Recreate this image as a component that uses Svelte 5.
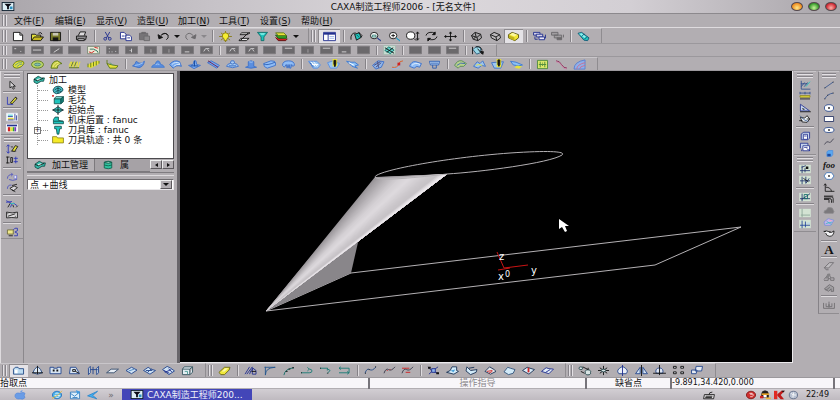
<script lang="ts">
    type Shape = [fill: string, stroke: string, d: string];
    type Group = { size: number; items: string[] };

    const K = '#141414';
    const GR = '#6b696c';
    const Y = '#e6e23a';
    const OL = '#5f7a1c';
    const B = '#5b8fe0';
    const LB = '#a9cdf5';
    const N = '#23308f';
    const T = '#1fc4bd';
    const R = '#d02222';
    const W = '#ffffff';
    const MINT = '#d3e3d3';

    // grey plate used by every disabled machining button
    const plate = (mark: string): Shape[] => [
        [GR, '#7c7a7d', 'M1.5 1.5h13v8h-13z'],
        ['none', '#d8d6d9', mark]
    ];
    const mintPlate: Shape = [MINT, 'none', 'M1 1h14v10h-14z'];

    // all icons are drawn on a 16 x 12 grid
    const icons: Record<string, Shape[]> = {
        new: [[W, K, 'M2.5 1.5h7l3 3v6h-10z'], ['none', K, 'M9.5 1.5v3h3']],
        open: [[Y, K, 'M1.5 10.5v-7h4l1 1h5v2'], ['#c8b820', K, 'M1.5 10.5l3-4h10l-3 4z'], ['none', K, 'M9 2.5q3-2 4 1']],
        save: [['#77792a', K, 'M2.5 1.5h11v9h-11z'], ['#c9c7b5', 'none', 'M5 2h6v3h-6z'], [K, 'none', 'M5 7h6v4h-6z']],
        print: [['#dcdadc', K, 'M4.5 5l2-4h6l-1.5 4'], ['#8d8b8e', K, 'M2.5 5.5h11l-1 4h-10z'], ['#d7d5d8', K, 'M4 8.5h7v2h-7z']],
        cut: [['none', N, 'M5.5 1l4 7M10.5 1l-4 7'], ['none', N, 'M4 8.5a1.5 1.5 0 1 0 3 0a1.5 1.5 0 1 0 -3 0M9 8.5a1.5 1.5 0 1 0 3 0a1.5 1.5 0 1 0 -3 0']],
        copy: [[W, N, 'M2.5 1.5h4l2 2v5h-6z'], [W, N, 'M8.5 4.5h4l2 2v4h-6z'], ['none', N, 'M10 7.5h3M4 5.5h3']],
        paste: [['#767477', GR, 'M2.5 2.5h9v7h-9z'], ['#8d8b8e', GR, 'M7.5 5.5h6v5h-6z'], [GR, GR, 'M5 1.5h4v1h-4z']],
        undo: [['none', K, 'M5 5q5-5 8 0q1 3-2 4.5'], ['none', K, 'M6 4q5-3 7 1'], [K, K, 'M2 4l1 4.5l4-1.5z']],
        redo: [['none', GR, 'M11 5q-5-5-8 0q-1 3 2 4.5'], [GR, GR, 'M14 4l-1 4.5l-4-1.5z']],
        bulb: [['none', '#8a7d18', 'M8 0v12M1 6h14M3 2l10 8M13 2l-10 8'], ['#f5ee32', '#8a7d18', 'M4.5 5.5a3.5 3.5 0 1 1 7 0q0 2-2 3v2h-3v-2q-2-1-2-3']],
        swap: [['#e8e8ea', K, 'M5 2h9l-3 2h-8zM4 8h9l-3 2.5h-8z'], ['none', K, 'M12 2l-8 8']],
        funnel: [[T, '#146e6a', 'M2.5 1.5h11l-4 5v4h-3v-4z'], ['#8ef0ea', 'none', 'M5 2.5h6l-1.5 1.5h-3z']],
        layers: [[R, '#5c1010', 'M1.5 7l3 3.5h8l2-2'], ['#34a024', '#1c5a12', 'M1.5 4.5l3 3.5h9v-3z'], [Y, OL, 'M1.5 2h9l3 3h-9z']],
        panel: [[W, N, 'M1.5 1.5h13v9h-13z'], [N, 'none', 'M2 2h12v2h-12z'], ['none', N, 'M6.5 3v7'], ['none', '#9fb8e8', 'M8 6h5M8 8h5']],
        redraw: [[T, K, 'M6 3.5l5-1.5l2 5l-5 3z'], ['none', K, 'M2 9.5q-1-7 5-7.5M10 1l4 4l-1 2'], ['none', '#14605c', 'M8 4l3 3']],
        zoomBox: [[W, K, 'M2.5 5a4 3.5 0 1 0 8 0a4 3.5 0 1 0 -8 0'], ['none', '#2e7d74', 'M4.5 4.5h4v2h-4z'], ['none', '#2b3f8d', 'M10 8l4 3M10 7.5l4 3']],
        zoomIn: [[W, K, 'M2.5 5a4 3.5 0 1 0 8 0a4 3.5 0 1 0 -8 0'], ['none', K, 'M4.5 5h4M6.5 3v4'], ['none', '#1f9cc4', 'M10 8l4 3M10 7.5l4 3']],
        zoomDyn: [[W, K, 'M1.5 5a4.5 4 0 1 0 9 0a4.5 4 0 1 0 -9 0'], ['none', K, 'M10 8.5l2 2M13.5 1v9M12 3l1.5-2l1.5 2M12 8l1.5 2l1.5-2']],
        rotate: [['none', K, 'M2 5q1-4 7-3.5l3 1M14 6q-1 4-7 3.5l-3-1'], [K, K, 'M12 1v3h-3zM4 11v-3h3z']],
        pan: [['none', K, 'M8 1v10M2 6h12'], [K, K, 'M7 2.5l1-1.5l1 1.5zM7 9.5l1 1.5l1-1.5zM3 5v2l-1.5-1zM13 5v2l1.5-1z']],
        wire: [['#a9a7aa', K, 'M2.5 5l4-3.5l6 2l1 4l-4 3l-5-1.5z'], ['none', K, 'M2.5 5l6 2l4-3.5M8.5 7l1 3.5M6.5 2l1 4l-3 3']],
        hidden: [['#bab7ba', K, 'M2.5 4l4-2.5l6 2.5l1 3.5l-4 3l-6-3z'], ['none', K, 'M2.5 4l6 2.5l4-2.5M8.5 6.5l1 4']],
        shade: [['#f2e632', '#5d5710', 'M2.5 4l4-2.5l7 2.5v3.5l-4 3l-7-3z'], ['#c0b31c', 'none', 'M3 4.5l6 2.5v3.5l-6-3z'], ['#fbf7a0', 'none', 'M4 4l3-2l5 2l-3 2z']],
        cascade: [['#d5d3e8', N, 'M1.5 1.5h7v3h-7z'], ['#d5d3e8', N, 'M4.5 3.5h7v3h-7z'], ['#e8e6f5', N, 'M7.5 6.5h6v3h-6z'], ['none', N, 'M14.5 4v4M3 6v3h3']],
        cascadeOff: [['#a09da0', GR, 'M1.5 1.5h7v3h-7zM4.5 4.5h8v3h-8z'], [GR, GR, 'M7.5 7.5h5v2h-5z'], ['none', GR, 'M14.5 4v3']],
        torch: [[T, '#155a77', 'M2 2.5l4-1l8 6l-1.5 3l-4-.5z'], ['#8ff0f0', 'none', 'M3 3l3-.5l5 4l-2 1z'], ['none', '#155a77', 'M6 6l3-3M9 9l3-3']],
        plate1: plate('M3.5 4h2M10 7h1'),
        plate2: plate('M3 5.5h9'),
        plate3: plate('M5 8l6-4'),
        plate4: plate('M7 0'),
        plate5: plate('M4 7.5h1M7 7.5h1M11 7h1M4 4h1'),
        plate6: plate('M8 4v4M6 6h1'),
        plate7: plate('M8 5.5h1M8 7.5h1'),
        plate8: plate('M5 7.5h5'),
        plate9: plate('M5 7l2-3h4M9 5l2 2'),
        plate10: plate('M4 3.5h8'),
        path: [['#e9ecd8', '#7d8a78', 'M1.5 1.5h13v8h-13z'], ['none', R, 'M3 7.5l3 1l3-2M9 2.5l4 1'], ['none', '#2c6e5d', 'M4 4.5h4l4 2l1 2']],
        simulate: [['#c6dcd2', '#a4b8ae', 'M1.5 .5h13v10h-13z'], ['#5fd0c8', '#146e6a', 'M3 6l4-4l6 3.5l-4 4z'], ['none', K, 'M3 3l10 6M5 8l7-5']],
        post: [['#9ad7e6', '#2a5d7a', 'M2 5q4-5 8-2l1 5l-5 2z'], ['none', K, 'M1.5 2v8M5 2q6-1 7 4M7 4l5 6'], [K, 'none', 'M9 6l5 1l-1 4z']],
        y1: [[Y, OL, 'M2 7q2-5 8-5q4 0 4 2.5q-2 5-8 5.5q-4 0-4-3'], ['none', '#5f9c8c', 'M4 7q4-4 8-3M6 8.5q3-3 6-3']],
        y2: [['#bcd66a', OL, 'M1.5 6a6.5 4 0 1 0 13 0a6.5 4 0 1 0 -13 0'], ['#83bbb0', '#4c8878', 'M4.5 6a3.5 1.5 0 1 0 7 0a3.5 1.5 0 1 0 -7 0']],
        y3: [['#c6cc44', OL, 'M2 10q1-8 7-8l5 3q-5 0-5 5z'], ['none', '#f2f08a', 'M4 9q1-5 6-5.5M6.5 9q1-3 5-4']],
        y4: [['none', Y, 'M3 9l2-6l1 6l2-6l1 6l2-6l1 6l2-6M2 8l2-5'], ['none', OL, 'M2 9.5h11M4.5 8l2-5M8 8l2-5']],
        y5: [[Y, 'none', 'M1 8l3-3l8-3l3 1l-2 3l-8 4z'], ['none', OL, 'M2 9v-4M5 9v-5M8 8v-5M11 7v-5M14 5v-3']],
        y6: [['none', OL, 'M2 1v4l3 2'], [Y, OL, 'M2 5l6 1.5l6 1l-2 2.5h-7z'], ['none', '#5b9c78', 'M5 4l4 3']],
        b1: [[B, '#3f72c8', 'M1.5 7.5q3-1 4-5l3 2q3 1 6-2q-1 6-6 7z'], ['none', LB, 'M4 7q4 0 9-3']],
        b2: [[B, '#4179cf', 'M1.5 9q1-3 4-3q1-4 3-4t3 4q3 0 4 3z'], ['none', LB, 'M6 6q2-1 4 0']],
        b3: [['#78aaf0', '#3f72c8', 'M1.5 6q5-6 11-3l2 5q-6-2-9 2z'], ['none', '#d6e9fb', 'M4 6q4-4 9-1M6 8q3-3 7-2']],
        b4: [['#78aaf0', '#3f72c8', 'M1.5 7l5-1l1-4h2l1 4l4 1l-7 3.5z'], ['none', '#17499c', 'M8 2v6M4 7.5h8']],
        b5: [['#78aaf0', '#3f72c8', 'M1.5 4l4-2l9 5l-3 3z'], ['none', '#6a1a50', 'M2 2l11 7']],
        b6: [[LB, '#3f72c8', 'M1.5 8q1-3 4-3l1-3h3l1 3q3 0 4 3q-6 3-13 0'], ['none', '#2f62b8', 'M6 5q2 1 4 0M4 7.5h8']],
        b7: [[B, '#3f72c8', 'M1.5 9l3-1v-5q3-2 6 0v5l3 1q-6 2-12 0'], ['none', LB, 'M5.5 3q2.5 1 4 0']],
        b8: [['#8fbcf5', '#3f72c8', 'M1.5 5l8-3q5 0 5 2v3l-9 3q-4-1-4-5'], ['none', '#2f62b8', 'M2 5.5q3 2 12-2']],
        b9: [['#8fbcf5', '#3f72c8', 'M1.5 7q0-5 6.500-5t6.5 5l-2 1l-1-2l-1 4h-1v-4l-1 4l-1-4l-1 4l-1-4l-2 3z']],
        b10: [['#9cc6f0', B, 'M1.5 2.5l9 0l4 4l-3 3.5h-5z'], ['none', W, 'M4 3l5 5M7 3l4 5M4 6h8'], ['none', '#2f62b8', 'M3 4l4 5']],
        b11: [['#9cc6f0', B, 'M1.5 4l6-2l7 3l-3 5h-7z'], [Y, 'none', 'M7 0h5v8h-5z'], [K, K, 'M8.500 1.5h2v4l-1 3l-1-3z']],
        b12: [['#8cc0f5', '#3d7bd2', 'M1.5 2.5l5 1h4l4 3l-4 1l3 2.5l-6-2l-3-3z'], ['none', W, 'M4 4l6 3']],
        b13: [['#8fb5ea', '#3f72c8', 'M1.5 7l6-5l6.500 1l-3 6l-6 2z'], ['none', '#4a4a7a', 'M3 7l7-4M5 9l6-5M7 2.5l1 7']],
        b14: [['none', '#d8622c', 'M2 9q6 1 7-3t5-4'], ['none', '#8fb5ea', 'M2 10.5q8 1 9-5'], [R, 'none', 'M8 4h3v3h-3z']],
        b15: [['#8fbcf5', '#3f72c8', 'M1.5 8q2-6 7-5l6 2l-2 4l-3-1l-3 2z'], ['none', '#e8f2fc', 'M4 7q4-4 9-1']],
        b16: [['#bcd8f7', '#2f5fb0', 'M2.5 2.5h11l-1 4h-9z'], ['none', '#2f5fb0', 'M6 6.5v3.5h4v-3.5M4 4.5h8']],
        g1: [['#b7d18c', '#5b8b5b', 'M1.5 7q3-6 8-5l5 3l-3 3h-4l-2 2z'], ['none', '#3f67b3', 'M4 7q4-4 9-2']],
        g2: [['#9cc4ec', '#3f72c8', 'M1.5 8l4-5l3 2l3-3l3 6l-4-1l-4 3z'], ['none', Y, 'M4 7l3-1l4 1']],
        g3: [['#9cc6f0', '#3f72c8', 'M1.5 4l13-1l-3 7h-7z'], [Y, 'none', 'M7 0h5v9h-5z'], [K, K, 'M8.5 1h2v5l-1 2l-1-2z']],
        g4: [['#8cc0f5', '#3d7bd2', 'M1.5 2.5l6 1l7 3l-4 1l-6-1z'], [Y, 'none', 'M8 7l6 1l-3 2.5l-5-1z']],
        chip: [['#dbe86a', '#4c8a3c', 'M2.5 1.5h11v9h-11z'], ['none', '#4c8a3c', 'M5.5 3v6M10.5 3v6M7.5 4.5h1M7.5 7h1M4 6h8']],
        curveP: [['none', '#86254f', 'M2 2q4 0 6 4t6 4'], ['none', '#c884a8', 'M2 3q4 0 6 4t6 4']],
        fan: [['#8fb0ea', '#5a7fd0', 'M2 11q0-8 12-10v10z'], ['none', '#cc6f8f', 'M5 11q0-5 9-7M8 11q0-3 6-4']],
        arrow: [['#d8d6d9', K, 'M5.5 1.5v8l2-1.5l2 3l1.5-1l-2-2.5h3z']],
        sketch: [['none', '#2832b8', 'M2.5 1v9h7'], [Y, K, 'M6 8.5l6-7l2 1.5l-6 6.5z'], [K, K, 'M12 1.5l2 1.5']],
        props: [[W, '#e8eef8', 'M1.5 1.5h13v9h-13z'], ['#7adce4', 'none', 'M3 3h6v2h-6z'], ['#e6dc46', 'none', 'M3 7h7v2h-7z'], ['none', N, 'M11.5 2v8M13.5 4v6M3 5.5h6M3 9.5h7']],
        palette: [[W, W, 'M1.5 1.5h13v9h-13z'], [N, 'none', 'M2 2h12v2h-12z'], [R, 'none', 'M3 5h3v5h-3z'], [Y, 'none', 'M6 5h3v5h-3z'], ['#28a23c', 'none', 'M9 5h2v5h-2z'], ['#7b30c0', 'none', 'M11 5h2v5h-2z']],
        dim1: [['none', '#2832b8', 'M3.5 1v10M1.5 3l2-2l2 2M1.5 9l2 2l2-2'], ['none', K, 'M7 3.5h2M7 8.5h6'], [Y, K, 'M8 8l4-6l3 1l-4 6z']],
        dim2: [['none', K, 'M2.5 2v8M1 2.5h4M1 9.5h4M6.5 3v6h2v-6z'], ['none', '#2832b8', 'M12.5 2v8M10 4h5M10 8h5']],
        rot1: [['none', '#4a50c0', 'M2.5 8q0-5 6-5M9 3l-2-2M9 3l-2 2M13.5 4v5q-5 2-9 0'], [W, '#8084d8', 'M10.5 4.5h3v3h-3z']],
        rot2: [['none', '#4a50c0', 'M2.5 7q0-5 5-4.5'], ['#dad8dc', K, 'M5.5 6.5l5-3l4 2l-5 4z'], ['none', K, 'M8 3l6-1.5M8 8l4 2.5']],
        trim: [['none', '#2832b8', 'M1 4l7-1M1 2l6 3M10 5l4 3M8 6l-2 4'], ['none', K, 'M3 10l3-5M10 10l-1-3M13 10l2-2'], ['none', T, 'M6 5.5h5']],
        film: [['#dcdadc', K, 'M1.5 2.5q7 2 13 0v7q-7-1-13 0z'], ['none', K, 'M3 7.5l9-3M3 4v1M12 7v1']],
        macro: [['#efe88a', '#6a6636', 'M2.5 3.5h7v5h-7z'], ['none', '#2832b8', 'M9.5 3.5l2-2h3v3l-3 1.5l3 1.5v3h-4'], ['none', K, 'M4 10.5h5']],
        axis: [['none', '#2c4c8c', 'M3.5 1v10h11M3.5 8l4-5M7 8l4-5M3 4.5h8'], ['none', T, 'M9 8l5-6']],
        ruler: [['none', '#2c4c8c', 'M2 2.5h12M2 1v3M14 1v3M8 1v3'], [Y, '#8d8424', 'M2 5.5h12v2h-12z'], ['none', K, 'M2 9.5h12']],
        triangle: [['#c5d3ea', N, 'M2.5 1.5v8h11z'], ['none', K, 'M5.5 6v1.5h2M2 10.5h13']],
        blob: [['#eef2f6', K, 'M2.5 4l5 1l3-3l3 4l-3 4l-6-.5z'], ['none', '#3b5a92', 'M2 2l5 5l5 2'], ['none', K, 'M1 8h4M10 6h4']],
        save3d: [['#c5d3ea', N, 'M3.5 10.5v-7l3-2h7v7l-2 2z'], [W, N, 'M6 4h5v6h-5z'], ['none', N, 'M7 6h3']],
        save4d: [['#c5d3ea', N, 'M2.5 7.5v-6h9v3'], [W, N, 'M5.5 4.5h8v6h-8z'], ['none', N, 'M7 6.5h4M10 8l4 2.5M4 9v2']],
        ax1: [mintPlate, ['none', '#1d2f6a', 'M2 8h12M4.5 2v9M4 4l5-2M8 5v5'], [K, 'none', 'M9 3h3v3h-3z']],
        ax2: [mintPlate, ['none', '#1d2f6a', 'M2 7h12M4.5 2v9M9 2v8l4-6'], ['none', K, 'M6 4l6 4']],
        ax3: [mintPlate, ['none', '#1d2f6a', 'M2 8h12M4.5 2v9M4 9l10-7'], ['none', '#0f6b68', 'M7 3h4v5h-4z']],
        ax4: [mintPlate, ['none', '#8aa596', 'M4.5 1v10M3 8.5h11']],
        ax5: [mintPlate, ['none', '#1d3f9a', 'M4.5 2v9M2 7.5h12M8.5 3v7'], ['none', LB, 'M10 5h4']],
        line: [['none', '#34538e', 'M3 9.5l10-7'], [K, K, 'M2.5 9.5h1M12.5 2.5h1']],
        arc: [['none', '#34538e', 'M3 9.5q3-6 10-7'], [K, K, 'M2.5 9.5h1M12.5 2.5h1M6 5h1']],
        circle: [[W, '#26488e', 'M2.5 6a5.5 4 0 1 0 11 0a5.5 4 0 1 0 -11 0'], [K, K, 'M7.5 5.5h1v1h-1z']],
        rect: [[W, '#1e2c5e', 'M2.5 3h11v6h-11z']],
        ellipse: [[W, '#26488e', 'M2 6a6 3 0 1 0 12 0a6 3 0 1 0 -12 0'], [K, 'none', 'M7 5h2v2h-2z']],
        spline: [['none', '#3e3e4e', 'M2.5 9q3-5 5-3t6-4']],
        point: [['#5aa8f0', '#4f92e0', 'M5.5 4.5l2-1.5h5v5l-1.5 2h-5.5z'], ['#1c4ca4', 'none', 'M6 7h4v3h-4z']],
        polygon: [[W, '#3b72b8', 'M5 2h6l3 4l-3 4h-6l-3-4z'], [K, 'none', 'M7 5h2v2h-2z']],
        angle: [['none', K, 'M3.5 1v9h11M2 3l1.5-2l1.5 2M4 5q6 0 7 5']],
        offset: [['none', K, 'M2 3.5h9q2 0 2 2v5M2 5.5h7q2 0 2 2v3M2 2.5h11M2 6.5h6v4']],
        cloud: [['#7b797c', '#8d8b8e', 'M2 9q0-3 3-3q1-4 4-3q4 0 4 3q2 2 0 4h-10z']],
        surf: [['#c8b4ec', '#7d8fd8', 'M2 6l5-4l7 2l-4 6l-7 0z'], ['#f2a8c4', 'none', 'M8 3l4 1l-3 2z'], ['none', '#45b8c8', 'M4 8l8-2M5 5l6 4']],
        bowl: [['#f2f2f4', K, 'M2 4.5q3-2 6 0t6-1q0 6-5 6.5q-4 0-5-4'], [K, K, 'M1.5 4h3M8 5h2']],
        eraser: [['#bdbbbe', GR, 'M2.5 8l6-6h5l-6 6.5z'], ['none', GR, 'M2.5 8l2 2.5h3']],
        measure: [['none', GR, 'M2 10h5v-2h3v2h4v-3h-4l-2-5l-6 7M5 7h3'], ['#848285', 'none', 'M6 2l4 1l-3 4l-3 1z']],
        house: [['#a09ea1', GR, 'M2.5 7l6-5l5 3v5h-3v-3l-3 3z'], ['none', GR, 'M4 9l5-4']],
        tray: [['none', GR, 'M1.5 3.5v6.500h13v-6.500M4.5 4v4h7v-4M8 2v6'], ['#7b797c', 'none', 'M7 5h2v4h-2z']],
        f1: [['#bcdcf2', '#2a4f88', 'M2.5 10V4.5l2-2h3l1 1.5h5v6z'], [W, 'none', 'M4 5h3v4h-3z']],
        f2: [['#dbe8f4', '#2a4f88', 'M8 1.5q-4 3-5 7l5 1.5l5-1.5q-1-4-5-7'], ['none', K, 'M8 1v9M2 8.5h12']],
        f3: [['#d7e4f2', '#26488e', 'M2 2.5h4v1h4v-1h4v7h-12z'], [K, 'none', 'M5 5h2v2h-2zM9 5h2v2h-2z']],
        f4: [['#d7e4f2', '#26488e', 'M3.5 2.5h6l4 7h-11z'], ['none', K, 'M6 5h3v2h-3zM9 7l4 2']],
        f5: [['#d7e4f2', '#26488e', 'M2.5 3.5l2-2v7l-2 2zM11.5 3.5l2-2v7l-2 2zM7.5 2v8M4.5 5h8']],
        f6: [['#e8eef6', '#38506e', 'M1.5 8.5l5-4h8l-5 4z']],
        f7: [['#cfe2f4', '#26488e', 'M2 6l6-3.5l6 3l-6 4z'], ['none', '#4d88c2', 'M5 6.5l6-2']],
        f8: [['#cfe2f4', '#26488e', 'M1.5 6l5-3.5l3 2l5 1.5l-6 4z'], ['none', '#26488e', 'M6 8l4-4M4 6h7']],
        f9: [['#cfe2f4', '#26488e', 'M1.5 5l5-3.5l4 2l4 3l-6 4z'], ['none', N, 'M3 6l6 3M8 4l4 4M4 8l7-3']],
        f10: [['#e3edf2', '#34545e', 'M2.5 4.5h8v6h-8zM2.5 4.5l2-2.5h9l-3 2.5M13.5 2v6l-3 2.5'], ['none', '#4f9f98', 'M5 7h3v3']],
        rubber: [['#f0e83a', '#6a6618', 'M2 8l6-5.5h6l-1 3l-5 5h-4z'], ['#fbf8b0', 'none', 'M5 7l4-3.5h3l-4 3.5z']],
        e1: [['none', N, 'M2 10l5-8M4 10l6-8M7 10q1-5 4-6M10 3l4 3v4h-4z'], ['none', K, 'M9 7h5']],
        e2: [['none', '#26588e', 'M3.5 11q0-8 10.5-8.5M3.5 2v9M2.5 2.5h12']],
        e3: [['none', '#146e6a', 'M3 11q1-7 11-8'], [K, K, 'M5 7h2M8 4.5h2M12 3h2']],
        e4: [['none', '#1b7c76', 'M2 8.5h9q3 0 3-2t-3-2M9 2.5l2 2l-2 2'], [K, K, 'M2 8.5h1']],
        e5: [['none', '#1b7c76', 'M2 3.5h7l4 2.5l-3 3M10 3v3'], [K, K, 'M2 3.5h1M10 9h1']],
        e6: [['none', '#1b7c76', 'M2 3.5h11v5h-11M4 2l-2 1.5l2 1.5M11 7l2 1.5l-2 1.5']],
        c1: [['none', '#2a4f88', 'M2 9q2-6 5-4t7-3'], [K, K, 'M2 9h1M6 5h1M13 2h1']],
        c2: [['none', '#3a3a4a', 'M2 9q2-6 5-4t7-3'], [R, R, 'M5 6h1M8 5h1']],
        c3: [['none', '#3a3a4a', 'M2 9q2-6 5-4t7-3'], ['none', R, 'M2 3.5h8M6 8h5']],
        s1: [['none', N, 'M2 2q3 5 11 7M13 2q-5 3-10 8'], ['#8fb5ea', N, 'M6 4h4v4h-4z'], [K, 'none', 'M2 2h3v2h-3zM11 8h3v2h-3z']],
        s2: [['#d2eaf8', '#1e3456', 'M1.5 8l4-2l2-4h5v4l2 1l-5 3z'], ['#49a0d8', 'none', 'M6 6l5-1l-2 3z']],
        s3: [['#d2eaf8', '#1e3456', 'M3 2l4 4l7-1l-1 3l-6 2.5l-5-4z'], ['none', '#1e3456', 'M5 3.5l6-1']],
        s4: [['#e3e6ea', '#1e3456', 'M2 7l5-5l5 3l2 2l-6 3z'], ['none', R, 'M4 7l6-1M6 9l4-2']],
        s5: [['#d2eaf8', '#35577e', 'M2 7.5l4-5l3 1l5 1.5l-2 4l-5 1.5z']],
        s6: [['#dcecf8', '#1e3456', 'M1.5 6l5-3.5l8 2.5l-6 5z'], [R, 'none', 'M7 3h2v5h-2z']],
        s7: [['#e3eef8', N, 'M1.5 7l5-4l3 1l5 .5l-5 5z'], ['none', N, 'M6 8l5-3']],
        t1: [['#d9e4e4', '#26484e', 'M2 3.5a2 1.5 0 1 0 4 0a2 1.5 0 1 0 -4 0M9 8a3 2 0 1 0 5.5 0a3 2 0 1 0 -5.500 0'], ['none', K, 'M6 2l6 3M12 5v-2M4 7l4 2']],
        t2: [['none', K, 'M8 1v10M2 6h12M4 3l8 6M12 3l-8 6'], ['#d9e4e4', '#26484e', 'M5.5 6a2.5 1.5 0 1 0 5 0a2.5 1.5 0 1 0 -5 0']],
        t3: [['#e8edf6', '#26488e', 'M8 1.5q-8 4-4 8h8q4-4-4-8'], ['none', N, 'M8 0v12']],
        t4: [['#cfe0f2', '#26488e', 'M1.5 9.5l5-7v7zM14.5 9.5l-5-7v7z'], ['none', K, 'M8 0v12']],
        t5: [['#dfe6f2', '#26488e', 'M4.5 9q-2-5 3.5-6q5 1 3.5 6z'], ['none', K, 'M8 0v11M1 9h14']],
        t6: [['#dadfe6', K, 'M2.5 1.5h3v2h-3zM10.5 1.5h3v2h-3zM2.5 7.5h3v2h-3zM10.5 7.5h3v2h-3z']],
        t7: [['#e6ebf2', '#26488e', 'M6.5 1.5h7l-1 5h-7zM1.5 5.5h6l-1 4h-5z']],
        cutter: [['#32b8a8', '#124e49', 'M2 5l5-3.5l4 2h3.5l-1 4l-3 0l-5 3l-3.5-2z'], ['#d3f5f0', 'none', 'M5 5l4-1l2 1.5l-4 2z'], ['none', K, 'M2 5l4 2l7-3']],
        model: [['#49c0c8', '#123f49', 'M2 6q2-5 7-4.5q5 1 5 5q-3 4-8 4q-4-1-4-4.5'], ['none', '#123f49', 'M4 6q4-4 8 0M5 8q3-3 7 0M8 2v8']],
        blank: [[T, '#124e49', 'M3.5 4.5h8v6h-8z'], ['#8be6e0', '#124e49', 'M3.5 4.5l2-2.5h9l-3 2.5z'], ['#138078', '#124e49', 'M14.5 2v6l-3 2.5v-6z'], [R, 'none', 'M1 0h2v2h-2z']],
        origin: [['#3ccfc7', '#123f49', 'M2 6l6-4l6 4l-6 4z'], ['none', K, 'M8 0v12M1 6h14']],
        machine: [[T, '#124e49', 'M2.5 9.5v-4l2-3h4v4l6 1v3h-12z'], ['none', '#124e49', 'M3 7.5h11']],
        toolLib: [[T, '#124e49', 'M4 1.5h8v3h-2l-1 6.5h-2l-1-6.5h-2z']],
        folder: [['#f5ea28', '#8a821a', 'M1.5 9.5v-7.5h5l1 1.5h7v6z']],
        drum: [['#2fc4a0', '#125a49', 'M3.5 2.5q5-2 9 0v7q-4 2-9 0z'], ['#b5f0de', '#125a49', 'M3.5 3q5 2 9 0q-4-2-9 0'], ['none', '#125a49', 'M3.5 6q5 2 9 0']],
        apple: [['#6a9ce6', '#5b8ddb', 'M8 4q4-2 6 0q-2 3 0 5q-2 3-6 1.5q-5 1-6-3q0-5 6-3.5'], ['#6a9ce6', 'none', 'M8 3q0-2 3-3q0 3-3 3']],
        ie: [['#4db2ea', '#246ebc', 'M2.5 6a5.5 4.5 0 1 0 11 0a5.5 4.5 0 1 0 -11 0'], ['none', W, 'M5 6.5h7M6 4.5q2-2 4 0M6 8q2 2 5 0'], ['none', '#e4b83a', 'M2 10q9-4 12-9']],
        mail: [['#dceefa', '#2d78be', 'M2.5 2.5h11v8h-11z'], ['none', '#2d78be', 'M2.5 4l5 3.5l6-5M5 9h6'], ['#3f9be0', 'none', 'M9 0l5 2l-3 3z']],
        bird: [['#44b0ee', '#2b86cc', 'M1.5 7l12-5.5l-6 5l5 4z']],
        keyboard: [['#e0dde0', K, 'M2.5 5.5h12l-1 5h-12z'], ['none', K, 'M4 7.5h8M3.5 9h8M8 5.5q0-3 4-3']],
        shield: [['#cf3030', '#7c1414', 'M2.5 6a5.5 4.5 0 1 0 11 0a5.5 4.5 0 1 0 -11 0'], ['none', '#f4d0d0', 'M6 4q4-1 5 2q-1 3-4 2'], ['none', W, 'M7 5h3']],
        qq: [['#23201e', '#23201e', 'M4 5q0-4 4-4t4 4v4h-8z'], [W, 'none', 'M6 6h4v3h-4z'], ['#e4a228', 'none', 'M4 4h9v2h-9z'], [R, 'none', 'M2 7h4v3h-4z'], ['#f0b53a', 'none', 'M9 9h6v2h-6z']],
        kav: [['#e02a22', 'none', 'M2 1h4v10h-4z'], ['#c01a1a', 'none', 'M6 5l5-4h4l-5 5l4 5h-4l-4-4z'], [K, 'none', 'M11 1h4l-2 2z']],
        sound: [['#b9c2d2', '#5d6a86', 'M3.5 6a5 4.5 0 1 0 10 0a5 4.5 0 1 0 -10 0'], ['none', W, 'M6 4q3 2 2 5M8.5 3v3h3']]
    };

    const menus = [
        ['文件', 'F'], ['编辑', 'E'], ['显示', 'V'], ['造型', 'U'],
        ['加工', 'N'], ['工具', 'T'], ['设置', 'S'], ['帮助', 'H']
    ];

    const standardBar: Group[] = [
        { size: 56, items: ['new', 'open', 'save'] },
        { size: 19, items: ['print'] },
        { size: 111, items: ['cut', 'copy', 'paste', 'undo', 'caret', 'redo', 'caretOff'] },
        { size: 84, items: ['bulb', 'swap', 'funnel', 'layers', 'caret'] }
    ];
    const viewBar: Group[] = [
        { size: 22, items: ['panel'] },
        { size: 113, items: ['redraw', 'zoomBox', 'zoomIn', 'zoomDyn', 'rotate', 'pan'] },
        { size: 56, items: ['wire', 'hidden', 'shade'] },
        { size: 37, items: ['cascade', 'cascadeOff'] },
        { size: 19, items: ['torch'] }
    ];
    const machiningBar: Group[] = [
        { size: 207, items: ['plate1', 'plate2', 'plate3', 'plate4', 'path', 'plate5', 'plate6', 'plate7', 'plate7', 'plate8', 'plate9'] },
        { size: 150, items: ['plate9', 'plate9', 'plate4', 'plate10', 'plate7', 'plate10', 'plate8', 'plate4'] },
        { size: 19, items: ['simulate'] },
        { size: 56, items: ['plate4', 'plate4', 'plate10'] },
        { size: 19, items: ['post'] }
    ];
    const pathBar: Group[] = [
        { size: 113, items: ['y1', 'y2', 'y3', 'y4', 'y5', 'y6'] },
        { size: 169, items: ['b1', 'b2', 'b3', 'b4', 'b5', 'b6', 'b7', 'b8', 'b9'] },
        { size: 57, items: ['b10', 'b11', 'b12'] },
        { size: 75, items: ['b13', 'b14', 'b15', 'b16'] },
        { size: 75, items: ['g1', 'g2', 'g3', 'g4'] },
        { size: 56, items: ['chip', 'curveP', 'fan'] }
    ];

    const stateBar: Group[] = [
        { size: 11, items: ['arrow'] },
        { size: 11, items: ['sketch'] },
        { size: 22, items: ['props', 'palette'] }
    ];
    const dimensionBar: Group[] = [
        { size: 23, items: ['dim1', 'dim2'] },
        { size: 22, items: ['rot1', 'rot2'] },
        { size: 23, items: ['trim', 'film'] },
        { size: 11, items: ['macro'] }
    ];
    const queryBar: Group[] = [
        { size: 46, items: ['axis', 'ruler', 'triangle', 'blob'] },
        { size: 23, items: ['save3d', 'save4d'] }
    ];
    const axisBar: Group[] = [
        { size: 23, items: ['ax1', 'ax2'] },
        { size: 11, items: ['ax3'] },
        { size: 23, items: ['ax4', 'ax5'] }
    ];
    const curveBar: Group[] = [
        { size: 160, items: ['line', 'arc', 'circle', 'rect', 'ellipse', 'spline', 'point', 'foo', 'polygon', 'angle', 'offset', 'cloud', 'surf', 'bowl'] },
        { size: 11, items: ['A'] },
        { size: 34, items: ['eraser', 'measure', 'house'] },
        { size: 11, items: ['tray'] }
    ];

    const surfaceBar: Group[] = [
        { size: 188, items: ['f1', 'f2', 'f3', 'f4', 'f5', 'f6', 'f7', 'f8', 'f9', 'f10'] }
    ];
    const editBar: Group[] = [
        { size: 19, items: ['rubber'] },
        { size: 113, items: ['e1', 'e2', 'e3', 'e4', 'e5', 'e6'] },
        { size: 56, items: ['c1', 'c2', 'c3'] },
        { size: 133, items: ['s1', 's2', 's3', 's4', 's5', 's6', 's7'] }
    ];
    const transformBar: Group[] = [
        { size: 132, items: ['t1', 't2', 't3', 't4', 't5', 't6', 't7'] }
    ];

    const pressed = ['panel', 'shade', 'f1'];

    const treeItems = [
        { icon: 'model', text: '模型' },
        { icon: 'blank', text: '毛坯' },
        { icon: 'origin', text: '起始点' },
        { icon: 'machine', text: '机床后置 : fanuc' },
        { icon: 'toolLib', text: '刀具库 : fanuc', expandable: true },
        { icon: 'folder', text: '刀具轨迹 : 共 0 条' }
    ];

    // grey level across the ruled surface, from its left edge to its right edge
    const shading = [
        [0, 150], [0.2, 178], [0.45, 212], [0.6, 222], [0.8, 204], [0.9, 198], [0.96, 228], [1, 245]
    ];
    const sliceCount = 36;

    function grey(t: number) {
        const i = Math.max(1, shading.findIndex(([stop]) => stop >= t));
        const [t0, g0] = shading[i - 1];
        const [t1, g1] = shading[i];
        return Math.round(g0 + ((g1 - g0) * (t - t0)) / (t1 - t0));
    }

    // point on the part of the section curve that the surface hangs from
    function rim(t: number) {
        const s = 1 - t;
        const x = s * s * 195 + 2 * s * t * 213 + t * t * 267;
        const y = s * s * 106 + 2 * s * t * 111 + t * t * 103;
        return `${x.toFixed(1)} ${y.toFixed(1)}`;
    }

    const slices = Array.from({ length: sliceCount }, (_, i) => {
        const g = grey((i + 0.5) / sliceCount);
        return {
            d: `M86 240L${rim(i / sliceCount)}L267 103Z`,
            fill: `rgb(${g}, ${g - 4}, ${g})`
        };
    });

    let mode = $state('point');
    let tab = $state('manage');
</script>

{#snippet icon(name: string)}
    <svg class="icon" viewBox="0 0 16 12" aria-hidden="true">
        {#each icons[name] as [fill, stroke, d]}
            <path {fill} {stroke} {d} />
        {/each}
    </svg>
{/snippet}

{#snippet logo()}
    <svg class="logo" viewBox="0 0 14 10" aria-hidden="true">
        <path d="M0 0h14v10h-14z" fill="#0c1c2c" />
        <path d="M1 1h12v8h-12z" fill="#dff0f6" />
        <path d="M3 2h8l-3 3v3h-2v-3z" fill="#0a0a14" />
        <path d="M9 5h3v3h-3z" fill="#2b8fc0" />
    </svg>
{/snippet}

{#snippet bar(groups: Group[], label: string, vertical = false)}
    <div class="bar" class:vertical role="toolbar" aria-label={label}>
        <span class="grip"></span>
        {#each groups as group, i}
            {#if i > 0}<span class="sep"></span>{/if}
            <div class="group" style="flex-basis: {group.size}px">
                {#each group.items as item}
                    {#if item === 'caret' || item === 'caretOff'}
                        <button class="caret" class:off={item === 'caretOff'} aria-label="more"></button>
                    {:else if item === 'foo'}
                        <button class="tool formula">foo</button>
                    {:else if item === 'A'}
                        <button class="tool letter">A</button>
                    {:else}
                        <button class="tool" class:pressed={pressed.includes(item)} aria-label={item}>
                            {@render icon(item)}
                        </button>
                    {/if}
                {/each}
            </div>
        {/each}
    </div>
{/snippet}

<div class="app">
    <header class="titlebar">
        {@render logo()}
        <h1>CAXA制造工程师2006 - [无名文件]</h1>
        <div class="window-buttons">
            <button class="min" aria-label="最小化"></button>
            <button class="max" aria-label="最大化"></button>
            <button class="close" aria-label="关闭"></button>
        </div>
    </header>

    <nav class="menubar">
        <span class="grip"></span>
        {#each menus as [name, key]}
            <button>{name}(<u>{key}</u>)</button>
        {/each}
    </nav>

    <div class="row row-standard">
        {@render bar(standardBar, '标准工具')}
        {@render bar(viewBar, '显示工具')}
    </div>
    <div class="row row-machining">
        {@render bar(machiningBar, '加工工具')}
    </div>
    <div class="row row-path">
        {@render bar(pathBar, '轨迹工具')}
    </div>

    <main>
        <div class="dock dock-left">
            {@render bar(stateBar, '状态控制', true)}
            {@render bar(dimensionBar, '几何变换', true)}
        </div>

        <aside>
            <section class="manager">
                <div class="tree">
                    <div class="root">{@render icon('cutter')}加工</div>
                    <ul>
                        {#each treeItems as item}
                            <li>
                                {#if item.expandable}<button class="expander" aria-label="展开">+</button>{/if}
                                {@render icon(item.icon)}
                                <span>{item.text}</span>
                            </li>
                        {/each}
                    </ul>
                </div>
                <div class="tabs">
                    <button class="tab" class:active={tab === 'manage'} onclick={() => (tab = 'manage')}>
                        {@render icon('cutter')}加工管理
                    </button>
                    <button class="tab" class:active={tab === 'props'} onclick={() => (tab = 'props')}>
                        {@render icon('drum')}属
                    </button>
                    <span class="tab-scroll">
                        <button aria-label="向左"><i class="left"></i></button>
                        <button aria-label="向右"><i class="right"></i></button>
                    </span>
                </div>
            </section>
            <section class="command">
                <div class="combo">
                    <select bind:value={mode} aria-label="生成方式">
                        <option value="point">点 +曲线</option>
                        <option value="curve">曲线 +曲线</option>
                    </select>
                    <span class="drop"><i class="down"></i></span>
                </div>
            </section>
        </aside>

        <div class="viewport">
            <svg viewBox="0 0 612 291" preserveAspectRatio="xMinYMin meet" role="img" aria-label="直纹面">
                <!-- base outline -->
                <path class="wire" d="M86 240L171 202L561 156L475 194Z" />
                <!-- inner side of the surface -->
                <path d="M86 240L171 202L179 167Z" fill="#89868a" />
                <!-- outer side, one sliver per grey level -->
                {#each slices as slice}
                    <path d={slice.d} fill={slice.fill} />
                {/each}
                <!-- top section curve -->
                <path class="wire" d="M195 106C196 100 262 87 330 82C374 79 386 81 382 84C370 92 300 101 267 103C240 106 198 111 195 106Z" />

                <path class="axis" d="M317 181L324 197L348 194M318 199L330 197" />
                <text x="319" y="189">z</text>
                <text x="351" y="203">y</text>
                <text x="318" y="209">x</text>
                <text x="325" y="206" class="small">0</text>

                <path d="M379 148v10l3-2l3 5l2-1l-2-5h4z" fill="#fff" />
            </svg>
        </div>

        <div class="dock dock-right">
            {@render bar(queryBar, '查询工具', true)}
            {@render bar(axisBar, '坐标系工具', true)}
        </div>
        <div class="dock dock-right dock-curves">
            {@render bar(curveBar, '曲线生成', true)}
        </div>
    </main>

    <div class="row row-bottom">
        {@render bar(surfaceBar, '曲面生成')}
        {@render bar(editBar, '曲面编辑')}
        {@render bar(transformBar, '变换工具')}
    </div>

    <div class="statusbar">
        <span class="prompt">拾取点</span>
        <span class="guide">操作指导</span>
        <span class="snap">缺省点</span>
        <output class="coords">-9.891,34.420,0.000</output>
        <span class="rest"></span>
    </div>

    <footer class="taskbar">
        <button class="start" aria-label="开始">{@render icon('apple')}</button>
        <div class="quick">
            <button aria-label="Internet Explorer">{@render icon('ie')}</button>
            <button aria-label="邮件">{@render icon('mail')}</button>
            <button aria-label="迅雷">{@render icon('bird')}</button>
            <button>»</button>
        </div>
        <button class="task">{@render logo()}CAXA制造工程师200...</button>
        <span class="ime">{@render icon('keyboard')}</span>
        <div class="tray">
            {@render icon('shield')}
            {@render icon('qq')}
            {@render icon('kav')}
            {@render icon('sound')}
            <time>22:49</time>
        </div>
    </footer>
</div>

<style>
    :global(body) {
        margin: 0;
    }

    .app {
        --face: #b2aeb2;
        --light: #dedbde;
        --dark: #7c797d;
        display: flex;
        flex-direction: column;
        height: 100vh;
        min-height: 400px;
        overflow: hidden;
        background: var(--face);
        color: #111;
        font: 9px/10px 'DejaVu Sans', 'Noto Sans CJK SC', sans-serif;
        white-space: nowrap;
    }

    button {
        display: flex;
        align-items: center;
        justify-content: center;
        margin: 0;
        padding: 0;
        border: 0;
        background: none;
        color: inherit;
        font: inherit;
    }

    .icon {
        display: block;
        flex: none;
        width: 14px;
        height: 10px;
    }

    .row .icon {
        width: 15px;
        height: 11px;
    }

    .logo {
        flex: none;
        width: 14px;
        height: 9px;
    }

    /* title */
    .titlebar {
        display: flex;
        align-items: center;
        flex: 0 0 13px;
        padding: 0 3px 0 1px;
        border-bottom: 1px solid #8c898d;
        background: linear-gradient(90deg, #aaa6ab 0%, #c6c2c7 25%, #dcd8dc 50%, #d3cfd4 75%, #a9a5aa 100%);
    }

    h1 {
        flex: 1;
        margin: 0;
        font-size: 9px;
        font-weight: 400;
        text-align: center;
    }

    .window-buttons {
        display: flex;
        gap: 5px;
    }

    .window-buttons button {
        width: 12px;
        height: 9px;
        border: 1px solid #54484c;
        border-radius: 50%;
        box-sizing: border-box;
    }

    .min {
        background: radial-gradient(ellipse at 50% 70%, #ffe98a, #ee8a1c 70%);
    }

    .max {
        background: radial-gradient(ellipse at 50% 70%, #c8f59a, #2f9426 70%);
    }

    .close {
        background: radial-gradient(ellipse at 50% 70%, #ffb0a8, #cc2430 70%);
    }

    /* menu and toolbars */
    .menubar {
        display: flex;
        align-items: center;
        flex: 0 0 13px;
        border-bottom: 1px solid var(--light);
    }

    .menubar button {
        justify-content: flex-start;
        width: 41px;
        padding-left: 5px;
        box-sizing: border-box;
    }

    .row {
        display: flex;
        box-sizing: border-box;
        border-bottom: 1px solid #9b989c;
    }

    .row-standard {
        flex: 0 0 16px;
    }

    .row-machining {
        flex: 0 0 13px;
    }

    .row-path {
        flex: 0 0 14px;
    }

    .bar {
        display: flex;
        padding-right: 8px;
        border-right: 1px solid #8f8c90;
        border-top: 1px solid #c9c6ca;
    }

    .grip {
        flex: none;
        align-self: stretch;
        width: 4px;
        margin: 1px 3px 1px 2px;
        border: solid #87848a;
        border-width: 0 1px;
        box-shadow: inset 1px 0 #e4e1e5, 1px 0 #e4e1e5;
        box-sizing: border-box;
    }

    .sep {
        flex: none;
        align-self: stretch;
        width: 1px;
        margin: 1px 2px 1px 3px;
        border-right: 1px solid var(--light);
        background: #858287;
    }

    .group {
        display: flex;
        flex: none;
    }

    .tool {
        flex: 1 1 0;
        min-width: 0;
        min-height: 0;
    }

    .tool.pressed {
        background: #e4e2e6;
        box-shadow: inset 1px 1px #8d8a8e;
    }

    .caret {
        flex: 0 0 9px;
    }

    .caret::before,
    .down {
        content: '';
        border: 3px solid transparent;
        border-top-color: #111;
        border-bottom: 0;
    }

    .caret.off::before {
        border-top-color: #8a878b;
    }

    .formula {
        font: italic bold 9px/10px 'Liberation Serif', serif;
    }

    .letter {
        font: bold 13px/11px 'Liberation Serif', serif;
    }

    /* vertical bars */
    .bar.vertical {
        flex-direction: column;
        padding: 0 0 1px;
        border-right: 0;
        border-bottom: 1px solid #908d91;
    }

    .vertical .grip {
        width: auto;
        height: 4px;
        margin: 1px 3px 2px;
        border-width: 1px 0;
        box-shadow: inset 0 1px #e4e1e5, 0 1px #e4e1e5;
    }

    .vertical .sep {
        width: auto;
        height: 1px;
        margin: 1px 2px 2px;
        border-right: 0;
        border-bottom: 1px solid var(--light);
    }

    .vertical .group {
        flex-direction: column;
    }

    .dock-curves .bar {
        padding-bottom: 3px;
        border-left: 1px solid #858287;
    }

    main {
        display: flex;
        flex: 1 1 0;
        min-height: 0;
    }

    .dock {
        flex: 0 0 24px;
        box-sizing: border-box;
    }

    .dock-left {
        border-right: 1px solid #8b888c;
        border-left: 1px solid var(--light);
    }

    .dock-right {
        padding: 0 1px;
    }

    .dock-curves {
        flex-basis: 23px;
    }

    /* left panel */
    aside {
        display: flex;
        flex-direction: column;
        flex: 0 0 156px;
        padding: 2px 3px 0 3px;
        border-right: 3px solid #68656a;
        box-sizing: border-box;
    }

    .manager {
        border-bottom: 1px solid #7f7c80;
    }

    .tree {
        min-height: 86px;
        padding: 1px 3px 0 4px;
        border: 1px solid #4c4a4e;
        background: #fff;
        box-sizing: border-box;
    }

    .root,
    li {
        display: flex;
        align-items: center;
        gap: 3px;
        height: 10px;
    }

    ul {
        margin: 0 0 0 5px;
        padding: 0;
        border-left: 1px dotted #999;
        list-style: none;
    }

    li::before {
        content: '';
        width: 10px;
        border-top: 1px dotted #999;
    }

    li {
        position: relative;
    }

    .expander {
        position: absolute;
        left: -4px;
        width: 7px;
        height: 7px;
        border: 1px solid #777;
        background: #fff;
        font-size: 7px;
        line-height: 5px;
    }

    .tabs {
        display: flex;
        height: 13px;
    }

    .tab {
        gap: 5px;
        padding: 0 6px;
        border-right: 1px solid #7c797d;
        border-bottom: 1px solid #7c797d;
        background: #a6a2a6;
    }

    .tab + .tab {
        flex: 1;
        justify-content: flex-start;
        border-right: 0;
    }

    .tab.active {
        background: #b5b1b5;
    }

    .tab-scroll {
        display: flex;
    }

    .tab-scroll button,
    .drop {
        width: 12px;
        height: 9px;
        border: 1px solid;
        border-color: #eee #5c595d #5c595d #eee;
        box-sizing: border-box;
    }

    .tab-scroll button {
        margin-top: 1px;
    }

    .left,
    .right {
        border: 2px solid transparent;
    }

    .left {
        border-right: 3px solid #111;
        border-left: 0;
    }

    .right {
        border-left: 3px solid #111;
        border-right: 0;
    }

    .command {
        flex: 1;
        margin-top: 2px;
        padding-top: 3px;
        border-top: 1px solid var(--light);
    }

    .combo {
        display: flex;
        position: relative;
        height: 11px;
        border: 1px solid;
        border-color: #6f6c70 #e8e6e9 #e8e6e9 #6f6c70;
        background: #fff;
        box-sizing: border-box;
    }

    select {
        flex: 1;
        padding: 0 14px 0 2px;
        border: 0;
        appearance: none;
        background: none;
        color: #111;
        font: inherit;
    }

    .drop {
        display: flex;
        align-items: center;
        justify-content: center;
        position: absolute;
        top: 0;
        right: 1px;
        background: #b2aeb2;
        pointer-events: none;
    }

    /* drawing area */
    .viewport {
        flex: 1;
        min-width: 0;
        border-right: 1px solid #eceaed;
        border-bottom: 1px solid #eceaed;
        background: #000;
    }

    .viewport svg {
        display: block;
        width: 100%;
        height: 100%;
    }

    .wire {
        fill: none;
        stroke: #b4b1b4;
        stroke-width: 1;
    }

    .axis {
        fill: none;
        stroke: #c81414;
        stroke-width: 1;
    }

    .viewport text {
        fill: #fff;
        font: 10px 'DejaVu Sans', sans-serif;
    }

    .viewport .small {
        font-size: 8px;
    }

    /* bottom */
    .row-bottom {
        flex: 0 0 15px;
    }

    .statusbar {
        display: flex;
        flex: 0 0 11px;
        gap: 2px;
        background: #77747a;
        text-align: center;
    }

    .statusbar > * {
        background: #f8f6f9;
        border-bottom: 1px solid #b2aeb2;
        box-sizing: border-box;
    }

    .prompt {
        flex: 368 1 0;
        text-align: left;
    }

    .guide {
        flex: 215 1 0;
        color: #8c898d;
    }

    .snap {
        flex: 83 1 0;
    }

    .coords {
        flex: 161 1 0;
        font-size: 8px;
        text-align: left;
    }

    .rest {
        flex: 5 1 0;
    }

    .taskbar {
        display: flex;
        align-items: center;
        flex: 0 0 11px;
        background: linear-gradient(#d2ced3, #bfbac0);
    }

    .start {
        width: 40px;
    }

    .quick {
        display: flex;
        justify-content: flex-end;
        flex: 0 0 82px;
        gap: 4px;
    }

    .quick button:last-child {
        width: 18px;
        padding-right: 4px;
        color: #6c696d;
        box-sizing: border-box;
    }

    .task {
        justify-content: flex-start;
        gap: 3px;
        flex: 0 0 130px;
        height: 11px;
        padding-left: 8px;
        background: #4346b8;
        color: #f2f2fa;
        box-sizing: border-box;
    }

    .ime {
        margin-left: auto;
        padding-right: 28px;
    }

    .tray {
        display: flex;
        align-items: center;
        padding-right: 11px;
    }

    time {
        padding-left: 6px;
        font-size: 8px;
    }
</style>
